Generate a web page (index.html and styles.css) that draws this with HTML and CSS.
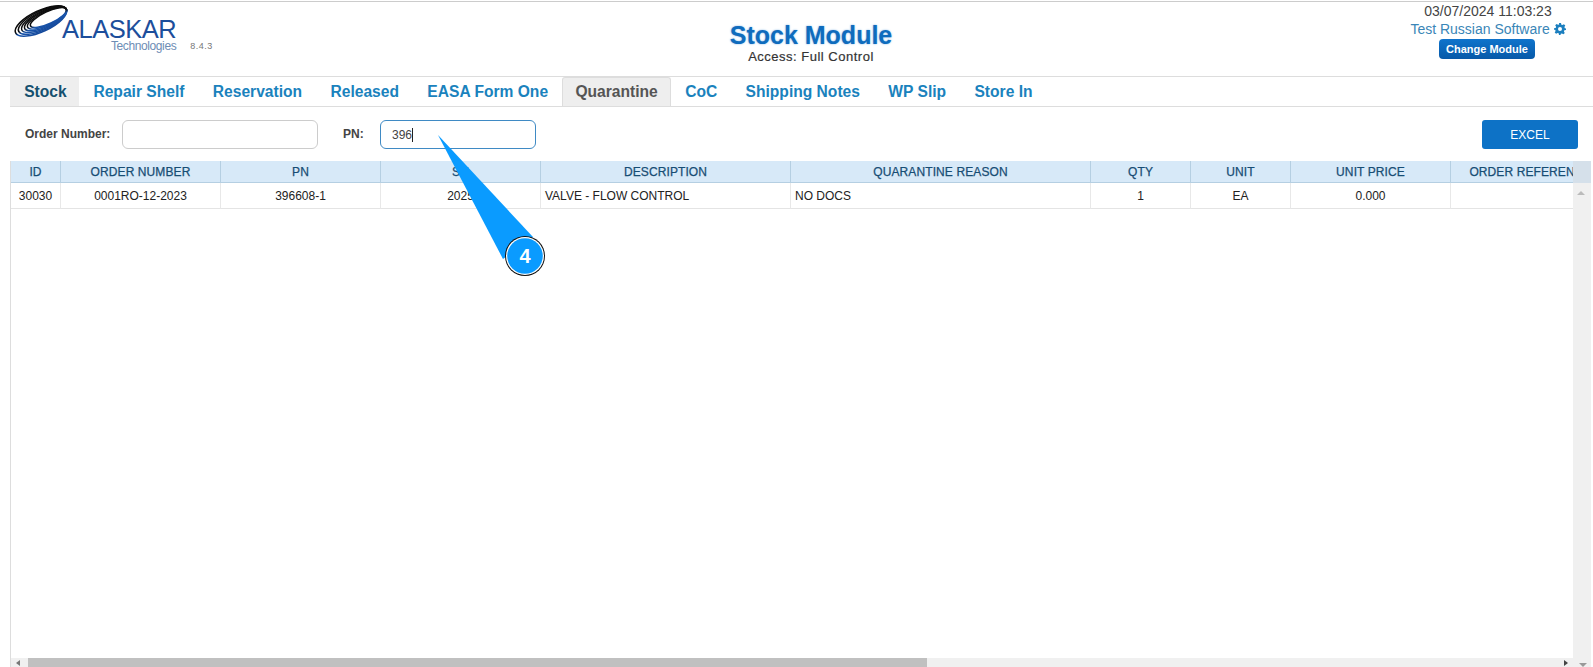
FILE: index.html
```html
<!DOCTYPE html>
<html lang="en">
<head>
<meta charset="utf-8">
<title>Stock Module</title>
<link rel="stylesheet" href="styles.css">
</head>
<body>
<header class="top">
  <div class="brand">
    <svg class="swoosh" width="56" height="34" viewBox="0 0 56 34" aria-hidden="true">
      <defs>
        <linearGradient id="rings" gradientUnits="userSpaceOnUse" x1="26" y1="5" x2="26" y2="25">
          <stop offset="0.5" stop-color="#0c0c0c"/>
          <stop offset="0.66" stop-color="#1a56ad"/>
          <stop offset="1" stop-color="#154a9c"/>
        </linearGradient>
      </defs>
      <g fill="none" stroke="url(#rings)" stroke-width="1.500" transform="rotate(-25 26 15)">
        <ellipse cx="26" cy="15" rx="28" ry="10.500"/>
        <ellipse cx="27.700" cy="15" rx="26.300" ry="9.500"/>
        <ellipse cx="29.400" cy="15" rx="24.600" ry="8.500"/>
        <ellipse cx="31" cy="15" rx="23" ry="7.600"/>
        <ellipse cx="32.600" cy="15" rx="21.400" ry="6.700"/>
        <ellipse cx="34.200" cy="15" rx="19.800" ry="6"/>
      </g>
    </svg>
    <div class="wordmark">ALASKAR</div>
    <div class="sub"><span class="tech">Technologies</span><span class="ver">8.4.3</span></div>
  </div>
  <div class="title">
    <h1>Stock Module</h1>
    <div class="access">Access: Full Control</div>
  </div>
  <div class="user">
    <div class="clock">03/07/2024 11:03:23</div>
    <div class="uname">Test Russian Software
      <svg class="gear" width="12" height="12" viewBox="0 0 24 24" aria-hidden="true"><path fill-rule="evenodd" d="M10 0h4l.7 3.300 2.200.9L19.800 2.400l2.800 2.800-1.800 2.900.9 2.200L24 11v3l-3.300.7-.9 2.200 1.800 2.900-2.800 2.800-2.900-1.800-2.200.9L13 24h-3l-.7-3.300-2.200-.9-2.900 1.800-2.800-2.800 1.800-2.900-.9-2.200L0 13.500v-3l3.300-.7.9-2.200-1.800-2.900 2.800-2.800 2.900 1.800 2.200-.9zM12 8a4 4 0 1 0 0 8 4 4 0 0 0 0-8z"/></svg>
    </div>
    <button class="change">Change Module</button>
  </div>
</header>

<nav class="tabs">
  <a class="tab first">Stock</a>
  <a class="tab">Repair Shelf</a>
  <a class="tab">Reservation</a>
  <a class="tab">Released</a>
  <a class="tab">EASA Form One</a>
  <a class="tab current">Quarantine</a>
  <a class="tab">CoC</a>
  <a class="tab">Shipping Notes</a>
  <a class="tab">WP Slip</a>
  <a class="tab">Store In</a>
</nav>

<section class="filters">
  <label class="lbl lbl-order">Order Number:</label>
  <div class="field field-order"></div>
  <label class="lbl lbl-pn">PN:</label>
  <div class="field field-pn"><span>396</span><i class="caret"></i></div>
  <button class="excel">EXCEL</button>
</section>

<section class="grid-wrap">
  <div class="grid-scroll">
    <div class="row head">
      <div>ID</div><div>ORDER NUMBER</div><div>PN</div><div>SN</div><div>DESCRIPTION</div><div>QUARANTINE REASON</div><div>QTY</div><div>UNIT</div><div>UNIT PRICE</div><div>ORDER REFERENCE</div>
    </div>
    <div class="row body">
      <div>30030</div><div>0001RO-12-2023</div><div>396608-1</div><div>2025</div><div class="left">VALVE - FLOW CONTROL</div><div class="left">NO DOCS</div><div>1</div><div>EA</div><div>0.000</div><div></div>
    </div>
    <div class="hbar"><i class="arrow-l"></i><div class="hthumb"></div><i class="arrow-r"></i></div>
  </div>
  <div class="vbar"><div class="vhead"></div><i class="arrow-u"></i><i class="arrow-d"></i></div>
</section>

<svg class="callout" width="110" height="150" viewBox="0 0 110 150" aria-hidden="true">
  <path d="M3 2 L98 104 L68 126 Z" fill="#0a9bff"/>
  <circle cx="90" cy="123" r="20" fill="#111"/>
  <circle cx="90" cy="123" r="19" fill="#fff"/>
  <circle cx="90" cy="123" r="17.800" fill="#0a9bff"/>
  <text x="90" y="130" text-anchor="middle" class="callout-num">4</text>
</svg>
</body>
</html>
```
FILE: styles.css
```css
* { box-sizing: border-box; }
html, body { margin: 0; padding: 0; height: 667px; overflow: hidden; background: #fff; }
body { font-family: "Liberation Sans", Arial, sans-serif; color: #333; position: relative; }

.top {
  height: 76px;
  margin-top: 1px;
  border-top: 1px solid #ccc;
  border-bottom: 1px solid #ddd;
  position: relative;
  display: flex;
  justify-content: center;
}
.brand { position: absolute; left: 13px; top: 2px; width: 210px; height: 60px; }
.swoosh { position: absolute; left: 2px; top: 2px; overflow: visible; }
.wordmark { position: absolute; left: 49px; top: 14px; font-size: 25.500px; letter-spacing: -0.5px; color: #1c4e9b; line-height: 22px; }
.sub { position: absolute; left: 98px; top: 36px; display: flex; gap: 14px; align-items: center; line-height: 12px; }
.tech { font-size: 12px; letter-spacing: -0.4px; color: #6d8db5; }
.ver { font-size: 9px; letter-spacing: 0.5px; color: #777; }

.title { text-align: center; padding-top: 19px; margin-left: 29px; }
.title h1 { margin: 0; font-size: 25px; line-height: 29px; color: #0f6cbd; font-weight: bold; text-shadow: 0 0 2px #7fb2e2; }
.access { font-size: 13px; line-height: 13px; color: #333; letter-spacing: 0.5px; -webkit-text-stroke: 0.2px #333; }

.user { position: absolute; right: 25px; top: 0; width: 160px; text-align: center; font-size: 14px; }
.clock { line-height: 18px; color: #444; white-space: nowrap; }
.uname { line-height: 19px; color: #3a86b7; white-space: nowrap; }
.gear { fill: #1c7fbf; vertical-align: -1px; }
.change {
  display: block; margin: 0 auto; width: 96px; height: 20px; padding: 0; position: relative; left: -1px;
  border: 0; border-radius: 4px; font: bold 11px "Liberation Sans", Arial, sans-serif; color: #fff;
  background: linear-gradient(#0f74cc, #0759a8);
}

.tabs {
  height: 30px; margin: 0 0 0 10px; padding: 0;
  border-bottom: 1px solid #ddd; display: flex;
}
.tab { display: block; padding: 0 14.200px; height: 29px; line-height: 30px; font-size: 15.600px; font-weight: bold; color: #1a82bd; white-space: nowrap; }
.tab.first { background: #eee; color: #15506f; padding-right: 12.600px; }
.tab.current { background: #eee; color: #555; border: 1px solid #ddd; border-bottom: 0; border-radius: 3px 3px 0 0; padding: 0 12.200px; line-height: 28px; }

.filters { height: 54px; position: relative; display: flex; align-items: flex-start; padding-top: 13px; }
.lbl { font-size: 12px; font-weight: bold; color: #444; line-height: 29px; }
.lbl-order { margin-left: 25px; width: 97px; }
.lbl-pn { margin-left: 25px; width: 37px; }
.field { height: 29px; border: 1px solid #ccc; border-radius: 6px; background: #fff; font-size: 12px; color: #444; line-height: 28px; padding-left: 11px; }
.field-order { width: 196px; }
.field-pn { width: 156px; border-color: #3f8ac4; }
.caret { display: inline-block; width: 1px; height: 14px; background: #222; vertical-align: -3px; }
.excel {
  position: absolute; left: 1482px; top: 13px; width: 96px; height: 29px; border: 0; border-radius: 3px;
  background: #0d72c6; color: #fff; font: 12px "Liberation Sans", Arial, sans-serif; padding: 0;
}

.grid-wrap { height: 506px; margin-left: 10px; margin-right: 3px; display: flex; border-left: 1px solid #ddd; }
.grid-scroll { width: 1562px; flex: none; overflow: hidden; position: relative; }
.row { display: grid; grid-template-columns: 50px 160px 160px 160px 250px 300px 100px 100px 160px 160px; width: 1640px; font-size: 12px; text-align: center; white-space: nowrap; }
.row > div { overflow: hidden; }
.head > div {
  height: 22px; line-height: 22px; background: #d7e9f8; color: #174d74;
  border-right: 1px solid #b5cfe2; border-bottom: 1px solid #b5cfe2;
  letter-spacing: 0.1px; -webkit-text-stroke: 0.25px #174d74;
}
.body > div {
  height: 26px; line-height: 26px; color: #222;
  border-right: 1px solid #e8e8e8; border-bottom: 1px solid #e4e4e4;
}
.body > .left { text-align: left; padding-left: 4px; }

.hbar { position: absolute; left: 0; right: 0; bottom: 0; height: 9px; background: #f0f0f0; }
.hthumb { position: absolute; left: 17px; top: 0; width: 899px; height: 9px; background: #c0c0c0; }
.arrow-l { position: absolute; left: 5px; top: 2px; border: 3.500px solid transparent; border-left: 0; border-right: 4px solid #777; }
.arrow-r { position: absolute; right: 5px; top: 2px; border: 3.500px solid transparent; border-right: 0; border-left: 4px solid #444; }
.vbar { width: 18px; background: #f0f0f0; position: relative; flex: none; }
.vhead { height: 22px; background: #d5e0ea; }
.arrow-u { position: absolute; left: 4px; top: 30px; border: 4px solid transparent; border-top: 0; border-bottom: 4px solid #bbb; }
.arrow-d { position: absolute; left: 6px; bottom: 0; border: 4px solid transparent; border-bottom: 0; border-top: 4px solid #999; }

.callout { position: absolute; left: 435px; top: 133px; }
.callout-num { font: bold 20px "Liberation Sans", Arial, sans-serif; fill: #fff; }
```
